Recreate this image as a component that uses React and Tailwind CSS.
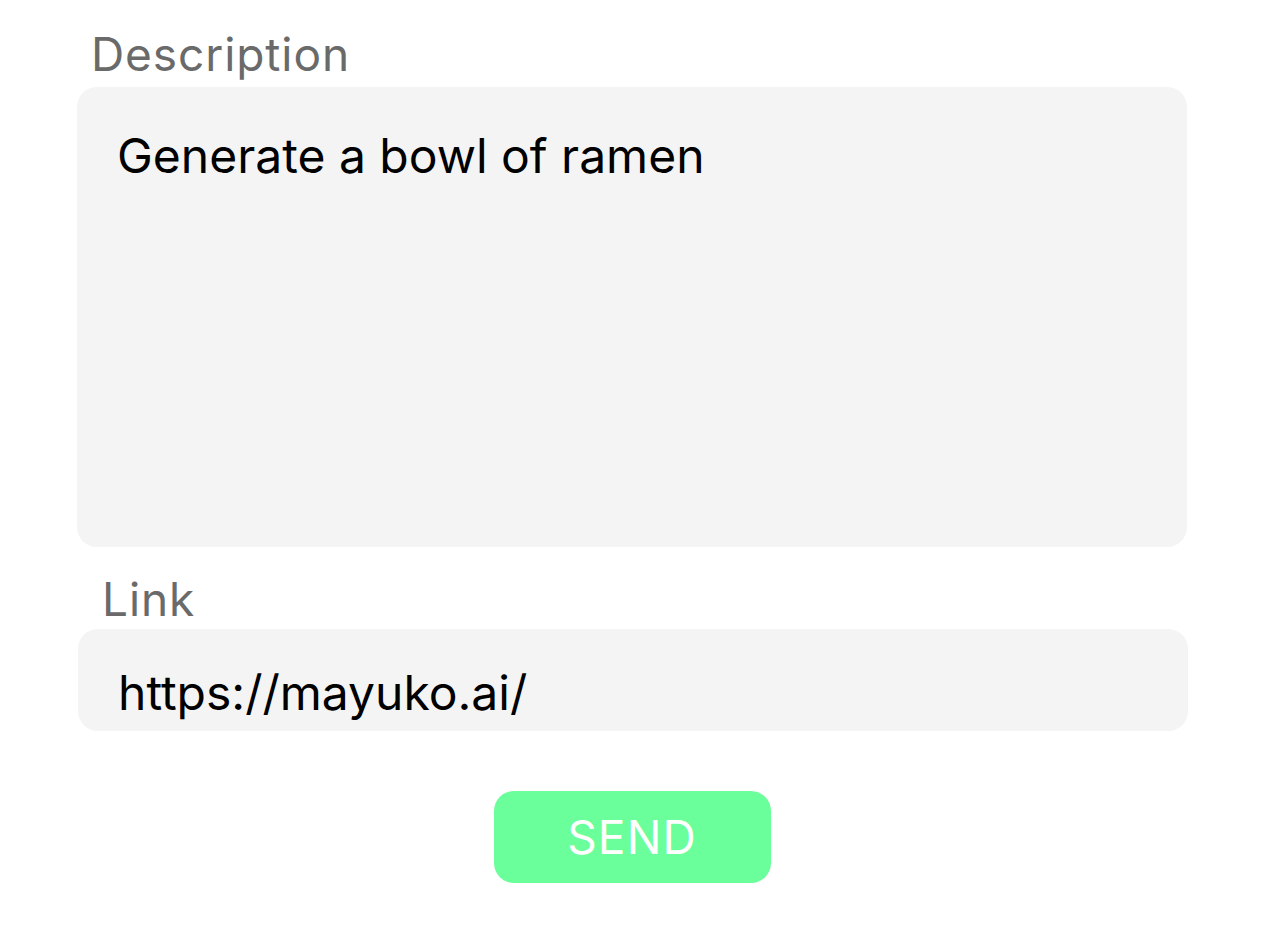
export default function App() {
  return (
    <div className="min-h-screen bg-white font-['Inter','Liberation_Sans',sans-serif]">
      <div className="flex flex-col pl-[77px] pt-[26px] w-[1187px]">
        <label className="pl-[14px] text-[46px] leading-[56px] tracking-[0.02em] text-[#6a6a6a]">Description</label>
        <div className="mt-[5px] h-[460px] w-[1110px] rounded-[20px] bg-[#f4f4f4] px-[40px] pt-[40px] text-[48px] leading-[58px] text-black">
          Generate a bowl of ramen
        </div>
        <label className="mt-[24px] pl-[25px] text-[46px] leading-[56px] tracking-[0.02em] text-[#6a6a6a]">Link</label>
        <div className="mt-[2px] ml-[1px] flex h-[102px] w-[1110px] items-center rounded-[20px] bg-[#f4f4f4] px-[40px] pt-[26px] text-[48px] leading-[58px] text-black">
          https://mayuko.ai/
        </div>
        <div className="mt-[60px] flex justify-center">
          <button className="h-[92px] w-[277px] rounded-[20px] bg-[#6bff9c] text-[46px] tracking-[0.025em] text-white">
            SEND
          </button>
        </div>
      </div>
    </div>
  );
}
